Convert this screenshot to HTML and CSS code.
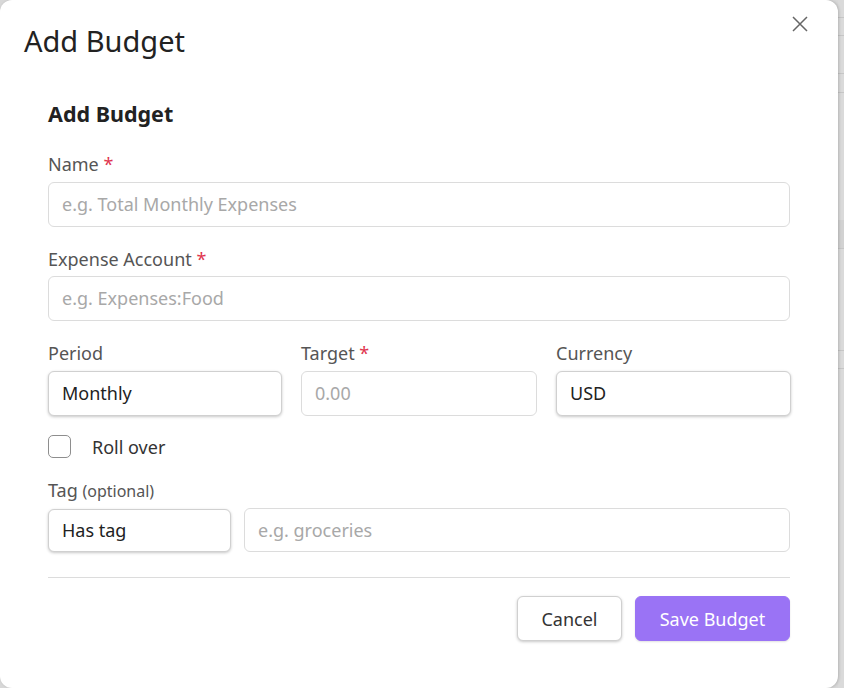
FILE: index.html
```html
<!DOCTYPE html>
<html lang="en">
<head>
<meta charset="utf-8">
<title>Add Budget</title>
<link rel="stylesheet" href="styles.css">
</head>
<body>
<div class="backdrop">
  <div class="page-lines">
    <div class="pl pl1"></div><div class="pl pl2"></div><div class="pl pl3"></div><div class="pl pl4"></div>
    <div class="pl pl5"></div><div class="pl pl6"></div><div class="pl pl7"></div><div class="pl pl8"></div>
  </div>
  <div class="modal">
    <div class="modal-header">
      <h1 class="modal-title">Add Budget</h1>
      <button class="close-btn" aria-label="Close">
        <svg width="16" height="16" viewBox="0 0 16 16"><path d="M1 1L15 15M15 1L1 15" stroke="#666" stroke-width="1.5" fill="none"/></svg>
      </button>
    </div>
    <form class="form">
      <h2 class="form-title">Add Budget</h2>
      <div class="field">
        <label class="label first">Name <span class="req">*</span></label>
        <div class="input placeholder">e.g. Total Monthly Expenses</div>
      </div>
      <div class="field">
        <label class="label">Expense Account <span class="req">*</span></label>
        <div class="input placeholder">e.g. Expenses:Food</div>
      </div>
      <div class="row3">
        <div class="field">
          <label class="label">Period</label>
          <div class="input select">Monthly</div>
        </div>
        <div class="field">
          <label class="label">Target <span class="req">*</span></label>
          <div class="input placeholder">0.00</div>
        </div>
        <div class="field">
          <label class="label">Currency</label>
          <div class="input select">USD</div>
        </div>
      </div>
      <div class="check-row">
        <span class="checkbox"></span>
        <span class="check-label">Roll over</span>
      </div>
      <div class="field">
        <label class="label tag-label">Tag <span class="opt">(optional)</span></label>
        <div class="tag-row">
          <div class="input select tag-select">Has tag</div>
          <div class="input placeholder tag-input">e.g. groceries</div>
        </div>
      </div>
      <div class="divider"></div>
      <div class="actions">
        <button type="button" class="btn btn-cancel">Cancel</button>
        <button type="button" class="btn btn-save">Save Budget</button>
      </div>
    </form>
  </div>
</div>
</body>
</html>
```
FILE: styles.css
```css
* { box-sizing: border-box; }
html, body { margin: 0; padding: 0; }
body {
  width: 844px;
  height: 688px;
  overflow: hidden;
  font-family: "Noto Sans", "Open Sans", sans-serif;
  background: #d9d9d9;
}
.backdrop {
  position: relative;
  width: 844px;
  height: 688px;
  background: #d8d8d8;
}
.page-lines { position: absolute; left: 838px; top: 0; width: 6px; height: 688px; background: #dadada; }
.pl { position: absolute; left: 0; width: 6px; height: 1px; background: #c6c6c6; }
.pl1 { top: 17px; } .pl2 { top: 35px; } .pl3 { top: 73px; } .pl4 { top: 92px; }
.pl5 { top: 220px; height: 28px; background: #d2d2d2; } .pl6 { top: 248px; }
.pl7 { top: 350px; } .pl8 { top: 368px; }
.modal {
  position: relative;
  width: 838px;
  height: 688px;
  background: #fff;
  border-radius: 12px;
  box-shadow: 1px 0 3px rgba(0,0,0,0.18);
  padding: 0 24px;
}
.modal-header {
  display: flex;
  justify-content: space-between;
  align-items: flex-start;
  height: 80px;
}
.modal-title {
  margin: 21px 0 0 0;
  font-size: 29px;
  font-weight: 400;
  color: #222;
  line-height: 40px;
}
.close-btn {
  margin: 16px 6px 0 0;
  border: 0;
  background: none;
  padding: 0;
  width: 16px;
  height: 16px;
  display: flex;
  cursor: pointer;
}
.form {
  padding: 0 24px;
}
.form-title {
  margin: 20px 0 0 0;
  font-size: 21.5px;
  font-weight: 700;
  color: #222;
  line-height: 28px;
}
.field { display: flex; flex-direction: column; }
.label {
  font-size: 18px;
  color: #555;
  line-height: 24px;
  margin: 20px 0 5px;
}
.label.first { margin: 24px 0 6px; }
.req { color: #e0354f; }
.opt { font-size: 16px; }
.input {
  height: 45px;
  border: 1px solid #dcdcdc;
  border-radius: 6px;
  font-size: 18px;
  line-height: 43px;
  padding: 0 13px;
  color: #222;
  background: #fff;
  white-space: nowrap;
}
.placeholder { color: #a8a8a8; }
.select {
  border: 1px solid #d0d0d0;
  box-shadow: 0 1px 3px rgba(0,0,0,0.22);
}
.row3 {
  display: grid;
  grid-template-columns: 234px 236px 235px;
  column-gap: 19px;
}
.row3 .label { margin: 20px 0 6px; }
.check-row {
  display: flex;
  align-items: center;
  margin-top: 19px;
  height: 23px;
}
.checkbox {
  width: 23px;
  height: 23px;
  border: 1px solid #8e8e8e;
  border-radius: 5px;
  background: #fff;
}
.check-label {
  margin-left: 21px;
  font-size: 18px;
  color: #333;
}
.tag-label { margin: 20px 0 6px; }
.tag-row { display: flex; gap: 13px; }
.tag-select { width: 183px; height: 43px; line-height: 41px; }
.tag-input { flex: 1; height: 44px; line-height: 42px; margin-top: -1px; }
.divider {
  margin-top: 25px;
  height: 1px;
  background: #dcdcdc;
}
.actions {
  display: flex;
  justify-content: flex-end;
  gap: 13px;
  margin-top: 18px;
}
.btn {
  height: 45px;
  border-radius: 6px;
  font-family: inherit;
  font-size: 18px;
  padding: 0;
  cursor: pointer;
}
.btn-cancel {
  width: 105px;
  background: #fff;
  color: #333;
  border: 1px solid #d0d0d0;
  box-shadow: 0 1px 3px rgba(0,0,0,0.22);
}
.btn-save {
  width: 155px;
  background: #9a73f5;
  color: #fff;
  border: 1px solid #9a73f5;
  box-shadow: 0 1px 2px rgba(0,0,0,0.12);
}
```
